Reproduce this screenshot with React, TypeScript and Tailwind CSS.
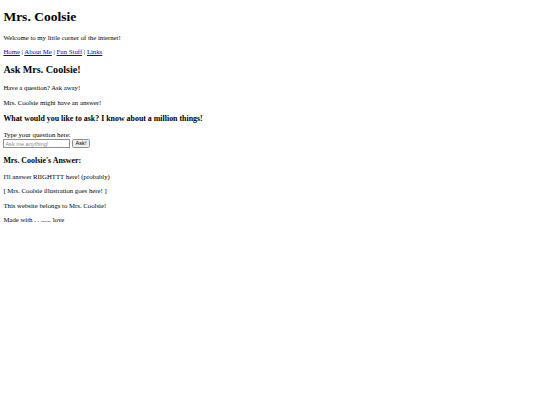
import React from 'react';

const serif = "font-['Liberation_Serif','Times_New_Roman',serif]";

export default function App() {
  return (
    <div className={`${serif} min-h-[405px] bg-white px-[3.4px] py-[9.05px] text-[6.75px] leading-[1.15] text-black`}>
      <h1 className="mb-[9.05px] text-[13.5px] font-bold">Mrs. Coolsie</h1>
      <p className="my-[6.75px]">Welcome to my little corner of the internet!</p>
      <p className="my-[6.75px]">
        <a className="text-[#0000ee] underline" href="#">Home</a> |{' '}
        <a className="text-[#0000ee] underline" href="#">About Me</a> |{' '}
        <a className="text-[#0000ee] underline" href="#">Fun Stuff</a> |{' '}
        <a className="text-[#0000ee] underline" href="#">Links</a>
      </p>

      <h2 className="mt-[8.4px] mb-[8.4px] text-[10.125px] font-bold">Ask Mrs. Coolsie!</h2>
      <p className="my-[6.75px]">Have a question? Ask away!</p>
      <p className="my-[6.75px]">Mrs. Coolsie might have an answer!</p>

      <h3 className="my-[7.9px] text-[7.9px] font-bold">What would you like to ask? I know about a million things!</h3>
      <div>
        <label className="block">Type your question here:</label>
        <div className="flex items-center gap-[1.7px]">
          <input
            className="h-[8.9px] w-[67px] border border-[#8f8f8f] px-[1px] font-['Liberation_Sans',Arial,sans-serif] text-[5.6px] placeholder:text-[#8a8a8a] outline-none"
            placeholder="Ask me anything!"
          />
          <button className="h-[8.9px] rounded-[1.5px] border border-[#8f8f8f] bg-[#efefef] px-[2.5px] font-['Liberation_Sans',Arial,sans-serif] text-[5.6px] leading-none">
            Ask!
          </button>
        </div>
      </div>

      <h3 className="my-[7.9px] text-[7.9px] font-bold">Mrs. Coolsie's Answer:</h3>
      <p className="my-[6.75px]">I'll answer RIIGHTTT here! (probably)</p>
      <p className="my-[6.75px]">[ Mrs. Coolsie illustration goes here! ]</p>
      <p className="my-[6.75px]">This website belongs to Mrs. Coolsie!</p>
      <p className="my-[6.75px]">Made with . . ...... love</p>
    </div>
  );
}
